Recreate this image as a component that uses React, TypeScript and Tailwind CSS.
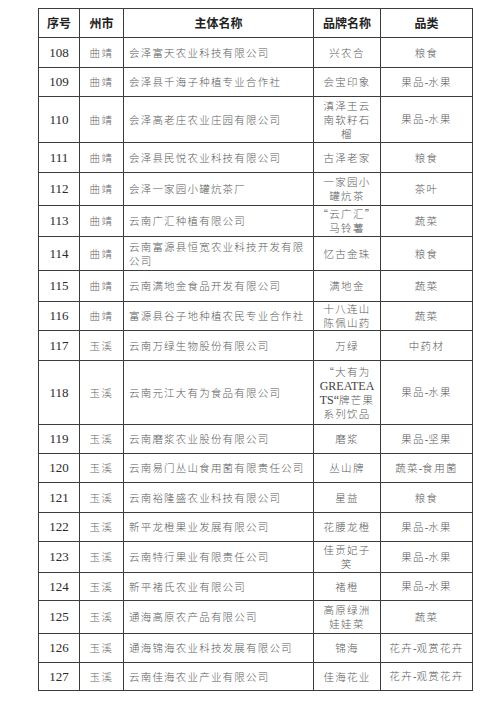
import React from "react";

type Row = {
  no: string;
  city: string;
  name: React.ReactNode;
  brand: React.ReactNode;
  cat: string;
  h: string;
};

const rows: Row[] = [
  { no: "108", city: "曲靖", name: "会泽富天农业科技有限公司", brand: "兴农合", cat: "粮食", h: "h-[30px]" },
  { no: "109", city: "曲靖", name: "会泽县千海子种植专业合作社", brand: "会宝印象", cat: "果品-水果", h: "h-[29px]" },
  {
    no: "110",
    city: "曲靖",
    name: "会泽高老庄农业庄园有限公司",
    brand: (
      <>
        滇泽王云
        <br />
        南软籽石
        <br />
        榴
      </>
    ),
    cat: "果品-水果",
    h: "h-[46px]",
  },
  { no: "111", city: "曲靖", name: "会泽县民悦农业科技有限公司", brand: "古泽老家", cat: "粮食", h: "h-[30px]" },
  {
    no: "112",
    city: "曲靖",
    name: "会泽一家园小罐炕茶厂",
    brand: (
      <>
        一家园小
        <br />
        罐炕茶
      </>
    ),
    cat: "茶叶",
    h: "h-[33px]",
  },
  {
    no: "113",
    city: "曲靖",
    name: "云南广汇种植有限公司",
    brand: (
      <>
        “云广汇”
        <br />
        马铃薯
      </>
    ),
    cat: "蔬菜",
    h: "h-[31px]",
  },
  {
    no: "114",
    city: "曲靖",
    name: (
      <>
        云南富源县恒宽农业科技开发有限
        <br />
        公司
      </>
    ),
    brand: "忆古金珠",
    cat: "粮食",
    h: "h-[34px]",
  },
  { no: "115", city: "曲靖", name: "云南满地金食品开发有限公司", brand: "满地金", cat: "蔬菜", h: "h-[31px]" },
  {
    no: "116",
    city: "曲靖",
    name: "富源县谷子地种植农民专业合作社",
    brand: (
      <>
        十八连山
        <br />
        陈佩山药
      </>
    ),
    cat: "蔬菜",
    h: "h-[29px]",
  },
  { no: "117", city: "玉溪", name: "云南万绿生物股份有限公司", brand: "万绿", cat: "中药材", h: "h-[30px]" },
  {
    no: "118",
    city: "玉溪",
    name: "云南元江大有为食品有限公司",
    brand: (
      <>
        “大有为
        <br />
        <span className="font-['Liberation_Serif'] tracking-normal text-[#444] text-[12px]">GREATEA</span>
        <br />
        <span className="font-['Liberation_Serif'] tracking-normal text-[#444] text-[12px]">TS“</span>牌芒果
        <br />
        系列饮品
      </>
    ),
    cat: "果品-水果",
    h: "h-[64px]",
  },
  { no: "119", city: "玉溪", name: "云南磨浆农业股份有限公司", brand: "磨浆", cat: "果品-坚果", h: "h-[29px]" },
  { no: "120", city: "玉溪", name: "云南易门丛山食用菌有限责任公司", brand: "丛山牌", cat: "蔬菜-食用菌", h: "h-[29px]" },
  { no: "121", city: "玉溪", name: "云南裕隆盛农业科技有限公司", brand: "星益", cat: "粮食", h: "h-[30px]" },
  { no: "122", city: "玉溪", name: "新平龙橙果业发展有限公司", brand: "花腰龙橙", cat: "果品-水果", h: "h-[29px]" },
  {
    no: "123",
    city: "玉溪",
    name: "云南特行果业有限责任公司",
    brand: (
      <>
        佳贡妃子
        <br />
        笑
      </>
    ),
    cat: "果品-水果",
    h: "h-[31px]",
  },
  { no: "124", city: "玉溪", name: "新平褚氏农业有限公司", brand: "褚橙", cat: "果品-水果", h: "h-[28px]" },
  {
    no: "125",
    city: "玉溪",
    name: "通海高原农产品有限公司",
    brand: (
      <>
        高原绿洲
        <br />
        娃娃菜
      </>
    ),
    cat: "蔬菜",
    h: "h-[33px]",
  },
  { no: "126", city: "玉溪", name: "通海锦海农业科技发展有限公司", brand: "锦海", cat: "花卉-观赏花卉", h: "h-[29px]" },
  { no: "127", city: "玉溪", name: "云南佳海农业产业有限公司", brand: "佳海花业", cat: "花卉-观赏花卉", h: "h-[28px]" },
];

const cjk = "font-['Noto_Sans_CJK_SC',sans-serif]";
const cell = "border border-[#3c3c3c] p-0 align-middle";

function Cat({ text }: { text: string }) {
  const parts = text.split("-");
  return (
    <>
      {parts.map((p, i) => (
        <React.Fragment key={i}>
          {i > 0 && <span className="font-['Liberation_Serif'] tracking-normal">-</span>}
          {p}
        </React.Fragment>
      ))}
    </>
  );
}

export default function App() {
  return (
    <div className="w-[500px] h-[709px] bg-white overflow-hidden pt-[8px] pl-[38px]">
      <table className={`border-collapse table-fixed w-[434px] border-[1.5px] border-[#333] ${cjk}`}>
        <colgroup>
          <col className="w-[41px]" />
          <col className="w-[44px]" />
          <col className="w-[190px]" />
          <col className="w-[67px]" />
          <col className="w-[92px]" />
        </colgroup>
        <thead>
          <tr className="h-[29px] text-[12px] font-bold text-[#222]">
            <th className={`${cell} text-center`}>序号</th>
            <th className={`${cell} text-center`}>州市</th>
            <th className={`${cell} text-center`}>主体名称</th>
            <th className={`${cell} text-center`}>品牌名称</th>
            <th className={`${cell} text-center`}>品类</th>
          </tr>
        </thead>
        <tbody>
          {rows.map((r) => (
            <tr key={r.no} className={r.h}>
              <td className={`${cell} text-center font-['Liberation_Serif'] text-[13px] text-[#2b2b2b]`}>{r.no}</td>
              <td className={`${cell} text-center text-[10.5px] tracking-[1.5px] text-[#666] font-light`}>{r.city}</td>
              <td className={`${cell} pl-[5px] text-left text-[10.5px] leading-[14px] tracking-[1.2px] text-[#5a5a5a] font-light`}>
                {r.name}
              </td>
              <td className={`${cell} text-center text-[10.5px] leading-[14px] tracking-[1.3px] text-[#5a5a5a] font-light`}>
                {r.brand}
              </td>
              <td className={`${cell} text-center text-[10.5px] tracking-[1.3px] text-[#5a5a5a] font-light`}>
                <Cat text={r.cat} />
              </td>
            </tr>
          ))}
        </tbody>
      </table>
    </div>
  );
}
